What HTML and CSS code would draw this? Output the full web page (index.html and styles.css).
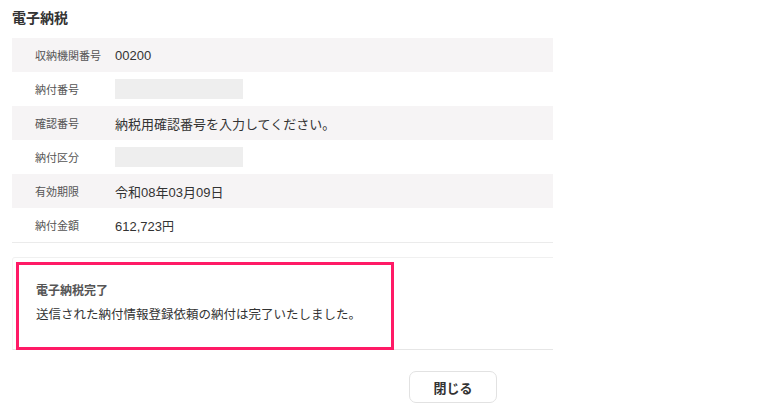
FILE: index.html
```html
<!DOCTYPE html>
<html lang="ja">
<head>
  <meta charset="UTF-8">
  <meta name="viewport" content="width=device-width, initial-scale=1.0">
  <title>電子納税</title>
  <link rel="stylesheet" href="styles.css">
</head>
<body>
  <div class="page">
    <h2 class="title">電子納税</h2>
    <div class="info">
      <div class="row shaded">
        <div class="label">収納機関番号</div>
        <div class="value">00200</div>
      </div>
      <div class="row">
        <div class="label">納付番号</div>
        <div class="value"><div class="blank"></div></div>
      </div>
      <div class="row shaded">
        <div class="label">確認番号</div>
        <div class="value">納税用確認番号を入力してください。</div>
      </div>
      <div class="row">
        <div class="label">納付区分</div>
        <div class="value"><div class="blank"></div></div>
      </div>
      <div class="row shaded">
        <div class="label">有効期限</div>
        <div class="value">令和08年03月09日</div>
      </div>
      <div class="row">
        <div class="label">納付金額</div>
        <div class="value">612,723<span class="yen">円</span></div>
      </div>
    </div>

    <div class="result">
      <div class="notice">
        <div class="notice-title">電子納税完了</div>
        <div class="notice-text">送信された納付情報登録依頼の納付は完了いたしました。</div>
      </div>
    </div>

    <div class="actions">
      <button class="close-btn">閉じる</button>
    </div>
  </div>
</body>
</html>
```

FILE: styles.css
```css
body {
  margin: 0;
  font-family: "Liberation Sans", "Noto Sans CJK JP", sans-serif;
  color: #333;
  background-color: #fff;
}

.page {
  width: 541px;
  padding: 8px 0 0 12px;
}

.title {
  margin: 0 0 10px;
  font-size: 14px;
  line-height: 20px;
  font-weight: bold;
  color: #333;
}

.info {
  border-bottom: 1px solid #ebebeb;
}

.row {
  display: flex;
  align-items: center;
  height: 34px;
}

.row.shaded {
  background-color: #f6f4f5;
}

.label {
  width: 80px;
  padding-left: 23px;
  font-size: 11px;
  color: #555;
}

.value {
  font-size: 13px;
  color: #333;
}

.yen {
  font-size: 12px;
}

.blank {
  width: 128px;
  height: 20px;
  background-color: #eeeeee;
}

.result {
  margin-top: 14px;
  padding: 4px 0 0 3px;
  border-top: 1px solid #f0f0f0;
  border-left: 1px solid #f3f3f3;
  border-bottom: 1px solid #e6e6e6;
  border-radius: 3px 0 0 0;
}

.notice {
  width: 337px;
  height: 62px;
  margin-bottom: -1px;
  padding: 17px 18px 3px 17px;
  border: 3px solid #ff1a66;
}

.notice-title {
  font-size: 12px;
  line-height: 18px;
  font-weight: bold;
  color: #555;
}

.notice-text {
  margin-top: 6px;
  font-size: 12.5px;
  line-height: 18px;
  white-space: nowrap;
  color: #333;
}

.actions {
  display: flex;
  padding: 21px 0 0 397px;
}

.close-btn {
  width: 88px;
  height: 32px;
  border: 1px solid #e2e2e2;
  border-radius: 7px;
  background-color: #fff;
  font-family: inherit;
  font-size: 13px;
  font-weight: bold;
  color: #333;
}
```
